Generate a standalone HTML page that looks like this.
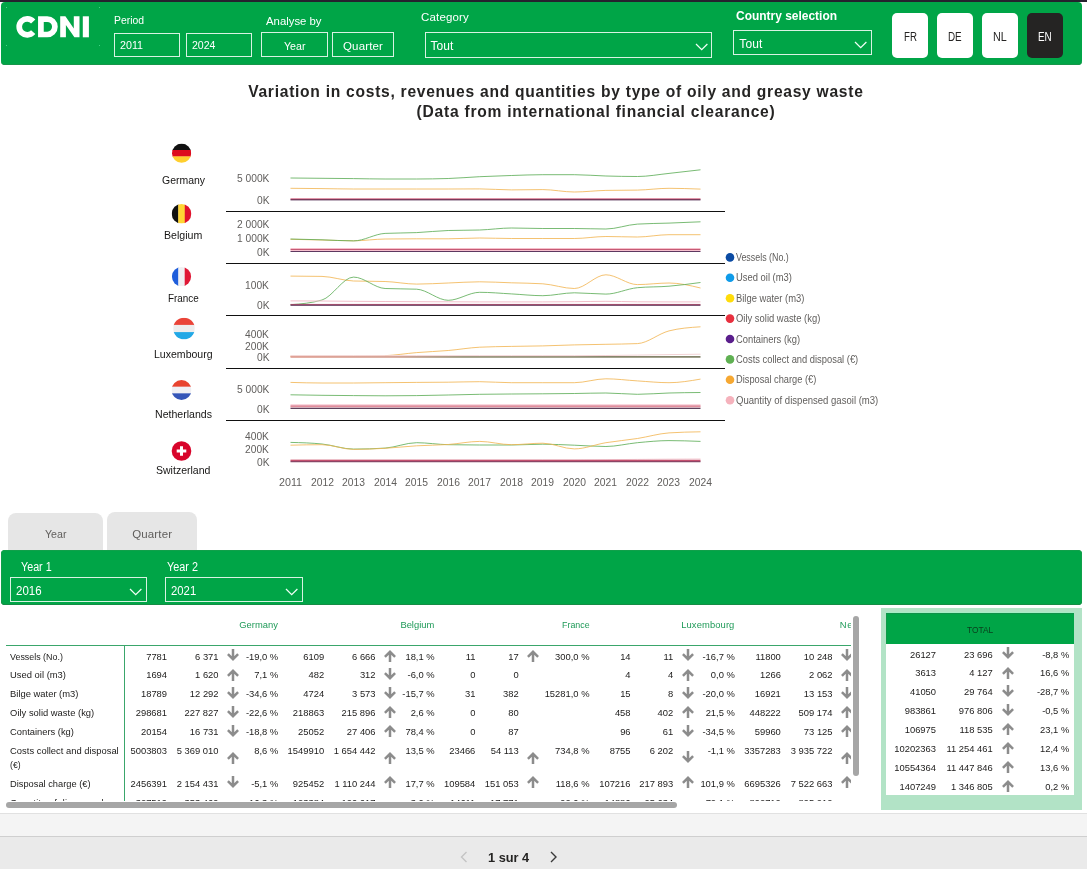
<!DOCTYPE html>
<html><head><meta charset="utf-8"><title>CDNI</title>
<style>
html,body{margin:0;padding:0}
body{width:1087px;height:869px;position:relative;overflow:hidden;background:#fff;font-family:"Liberation Sans",sans-serif}
#page{position:absolute;left:0;top:0;width:1087px;height:869px;will-change:transform}
.a{position:absolute}
.t{white-space:pre}
</style></head><body><div id="page">
<div class="a" style="left:0px;top:0px;width:1087px;height:2px;background:#25222e;"></div>
<div class="a" style="left:1px;top:2px;width:1081px;height:62.7px;background:#00a547;border-radius:4px;box-shadow:inset 0 -1px 0 #17964a;"></div>
<div class="a" style="left:6px;top:7px;width:1px;height:1px;background:#43d184;"></div>
<div class="a" style="left:99px;top:7px;width:1px;height:1px;background:#43d184;"></div>
<div class="a" style="left:6px;top:45px;width:1px;height:1px;background:#43d184;"></div>
<div class="a" style="left:99px;top:45px;width:1px;height:1px;background:#43d184;"></div>
<svg class="a" style="left:10px;top:10px" width="90" height="36" viewBox="10 10 90 36">
<g fill="none" stroke="#fff" stroke-width="5.7">
<path d="M33.2 21.5 A8 8 0 1 0 33.2 32.1" />
<path d="M40.9 19.1 H47.2 A7.7 7.7 0 0 1 47.2 34.5 H40.9 Z" stroke-linejoin="miter"/>
</g>
<path fill="#fff" d="M60.2 16.3 H65.4 L73.8 28.5 V16.3 H79.5 V37.3 H74.4 L65.9 25.1 V37.3 H60.2 Z"/>
<rect fill="#fff" x="82.8" y="16.3" width="6.1" height="21"/>
</svg>
<div class="a t" style="left:114.30px;top:13px;font-size:11px;line-height:15px;color:#ffffff;transform:scaleX(0.9435);transform-origin:0 0;">Period</div>
<div class="a" style="left:114px;top:33px;width:66px;height:24px;border:1px solid #d9f2e3;box-sizing:border-box;"></div>
<div class="a t" style="left:120.00px;top:38px;font-size:10.7px;line-height:15px;color:#ffffff;">2011</div>
<div class="a" style="left:186px;top:33px;width:66px;height:24px;border:1px solid #d9f2e3;box-sizing:border-box;"></div>
<div class="a t" style="left:192.00px;top:38px;font-size:10.7px;line-height:15px;color:#ffffff;transform:scaleX(0.9873);transform-origin:0 0;">2024</div>
<div class="a t" style="left:266.00px;top:13px;font-size:11.5px;line-height:16px;color:#ffffff;transform:scaleX(0.9866);transform-origin:0 0;">Analyse by</div>
<div class="a" style="left:261px;top:32px;width:67px;height:25px;border:1px solid #d9f2e3;box-sizing:border-box;"></div>
<div class="a t" style="left:283.75px;top:38px;font-size:11.5px;line-height:16px;color:#ffffff;transform:scaleX(0.9253);transform-origin:0 0;">Year</div>
<div class="a" style="left:332px;top:32px;width:62px;height:25px;border:1px solid #d9f2e3;box-sizing:border-box;"></div>
<div class="a t" style="left:343.00px;top:38px;font-size:11.5px;line-height:16px;color:#ffffff;letter-spacing:0.145px;">Quarter</div>
<div class="a t" style="left:421.00px;top:9px;font-size:11.5px;line-height:16px;color:#ffffff;letter-spacing:0.167px;">Category</div>
<div class="a" style="left:425px;top:32px;width:287px;height:25.5px;border:1px solid #d9f2e3;box-sizing:border-box;"></div>
<div class="a t" style="left:430.50px;top:38px;font-size:12px;line-height:17px;color:#ffffff;letter-spacing:0.080px;">Tout</div>
<svg class="a" style="left:694.5px;top:43.400000000000006px" width="13.4" height="7.6" viewBox="-1 -1 13.4 7.6"><path d="M0 0 L5.7 5.6 L11.4 0" fill="none" stroke="#f0fff6" stroke-width="1.25" stroke-linecap="butt"/></svg>
<div class="a t" style="left:736.00px;top:8px;font-size:12px;line-height:17px;color:#ffffff;font-weight:bold;transform:scaleX(0.9966);transform-origin:0 0;">Country selection</div>
<div class="a" style="left:733px;top:30px;width:139px;height:25px;border:1px solid #d9f2e3;box-sizing:border-box;"></div>
<div class="a t" style="left:739.30px;top:36px;font-size:12px;line-height:17px;color:#ffffff;letter-spacing:0.080px;">Tout</div>
<svg class="a" style="left:854.0999999999999px;top:41.2px" width="13.4" height="7.6" viewBox="-1 -1 13.4 7.6"><path d="M0 0 L5.7 5.6 L11.4 0" fill="none" stroke="#f0fff6" stroke-width="1.25" stroke-linecap="butt"/></svg>
<div class="a" style="left:892px;top:13px;width:36px;height:45px;background:#fff;border-radius:5px;"></div>
<div class="a t" style="left:903.75px;top:29px;font-size:12px;line-height:17px;color:#252423;transform:scaleX(0.8064);transform-origin:0 0;">FR</div>
<div class="a" style="left:937px;top:13px;width:36px;height:45px;background:#fff;border-radius:5px;"></div>
<div class="a t" style="left:948.35px;top:29px;font-size:12px;line-height:17px;color:#252423;transform:scaleX(0.8218);transform-origin:0 0;">DE</div>
<div class="a" style="left:982px;top:13px;width:36px;height:45px;background:#fff;border-radius:5px;"></div>
<div class="a t" style="left:993.35px;top:29px;font-size:12px;line-height:17px;color:#252423;transform:scaleX(0.8931);transform-origin:0 0;">NL</div>
<div class="a" style="left:1027px;top:13px;width:36px;height:45px;background:#252423;border-radius:5px;"></div>
<div class="a t" style="left:1038.35px;top:29px;font-size:12px;line-height:17px;color:#fff;transform:scaleX(0.8218);transform-origin:0 0;">EN</div>
<div class="a t" style="left:248.20px;top:81px;font-size:15.6px;line-height:22px;color:#252423;font-weight:bold;letter-spacing:0.731px;">Variation in costs, revenues and quantities by type of oily and greasy waste</div>
<div class="a t" style="left:416.60px;top:101px;font-size:15.6px;line-height:22px;color:#252423;font-weight:bold;letter-spacing:0.754px;">(Data from international financial clearance)</div>
<svg class="a" style="left:0;top:125px" width="900" height="375" viewBox="0 125 900 375">
<path d="M226 211.5 H725" stroke="#111" stroke-width="1" fill="none"/>
<path d="M226 263.5 H725" stroke="#111" stroke-width="1" fill="none"/>
<path d="M226 315.5 H725" stroke="#111" stroke-width="1" fill="none"/>
<path d="M226 368.5 H725" stroke="#111" stroke-width="1" fill="none"/>
<path d="M226 420.5 H725" stroke="#111" stroke-width="1" fill="none"/>
<defs><linearGradient id="lug" gradientUnits="userSpaceOnUse" x1="290" y1="0" x2="701" y2="0"><stop offset="0" stop-color="#dc9688"/><stop offset="0.25" stop-color="#cf9a8a"/><stop offset="0.42" stop-color="#8d8b6e"/><stop offset="1" stop-color="#83836a"/></linearGradient></defs>
<path d="M290.5 178.00 C301.0 178.10 311.5 178.20 322.0 178.30 C332.6 178.40 343.1 178.48 353.6 178.60 C364.1 178.72 374.6 179.00 385.1 179.00 C395.6 179.00 406.1 179.00 416.7 179.00 C427.2 179.00 437.7 178.83 448.2 178.50 C458.7 178.17 469.2 177.20 479.7 176.70 C490.2 176.20 500.8 175.83 511.3 175.50 C521.8 175.17 532.3 174.70 542.8 174.70 C553.3 174.70 563.8 174.70 574.3 174.70 C584.9 174.70 595.4 175.70 605.9 176.00 C616.4 176.30 626.9 176.50 637.4 176.50 C647.9 176.50 658.4 174.52 669.0 173.40 C679.5 172.28 690.0 171.04 700.5 169.80" fill="none" stroke="#5cac55" stroke-width="1.0" stroke-opacity="0.82" stroke-linecap="butt"/>
<path d="M290.5 188.30 C301.0 188.39 311.5 188.48 322.0 188.60 C332.6 188.72 343.1 189.00 353.6 189.00 C364.1 189.00 374.6 189.00 385.1 189.00 C395.6 189.00 406.1 189.00 416.7 189.00 C427.2 189.00 437.7 189.00 448.2 189.00 C458.7 189.00 469.2 188.90 479.7 188.90 C490.2 188.90 500.8 189.90 511.3 189.90 C521.8 189.90 532.3 189.60 542.8 189.60 C553.3 189.60 563.8 192.00 574.3 192.00 C584.9 192.00 595.4 190.60 605.9 190.40 C616.4 190.20 626.9 190.30 637.4 190.10 C647.9 189.90 658.4 188.30 669.0 188.30 C679.5 188.30 690.0 188.70 700.5 189.10" fill="none" stroke="#f1b552" stroke-width="1.0" stroke-opacity="0.82" stroke-linecap="butt"/>
<path d="M290.5 198.7 H700.5" fill="none" stroke="#d8708c" stroke-width="0.9" stroke-opacity="1"/>
<path d="M290.5 199.5 H700.5" fill="none" stroke="#7e3858" stroke-width="1.0" stroke-opacity="1"/>
<path d="M290.5 200.25 H700.5" fill="none" stroke="#6f4f6f" stroke-width="0.6" stroke-opacity="1"/>
<path d="M290.5 239.30 C301.0 239.53 311.5 239.75 322.0 240.00 C332.6 240.25 343.1 240.80 353.6 240.80 C364.1 240.80 374.6 239.13 385.1 239.00 C395.6 238.87 406.1 238.80 416.7 238.80 C427.2 238.80 437.7 238.80 448.2 238.80 C458.7 238.80 469.2 238.00 479.7 238.00 C490.2 238.00 500.8 238.50 511.3 238.50 C521.8 238.50 532.3 238.50 542.8 238.50 C553.3 238.50 563.8 238.50 574.3 238.50 C584.9 238.50 595.4 236.50 605.9 236.50 C616.4 236.50 626.9 237.00 637.4 237.00 C647.9 237.00 658.4 234.70 669.0 234.70 C679.5 234.70 690.0 234.70 700.5 234.70" fill="none" stroke="#f1b552" stroke-width="1.0" stroke-opacity="0.82" stroke-linecap="butt"/>
<path d="M290.5 239.00 C301.0 239.24 311.5 239.48 322.0 239.80 C332.6 240.12 343.1 240.90 353.6 240.90 C364.1 240.90 374.6 233.93 385.1 233.40 C395.6 232.87 406.1 233.08 416.7 232.60 C427.2 232.12 437.7 230.83 448.2 230.50 C458.7 230.17 469.2 230.33 479.7 230.00 C490.2 229.67 500.8 228.00 511.3 228.00 C521.8 228.00 532.3 228.50 542.8 228.50 C553.3 228.50 563.8 228.50 574.3 228.50 C584.9 228.50 595.4 229.00 605.9 229.00 C616.4 229.00 626.9 224.77 637.4 224.10 C647.9 223.43 658.4 223.48 669.0 223.10 C679.5 222.72 690.0 222.26 700.5 221.80" fill="none" stroke="#5cac55" stroke-width="1.0" stroke-opacity="0.82" stroke-linecap="butt"/>
<path d="M290.5 248.6 H700.5" fill="none" stroke="#f2a4b6" stroke-width="0.8" stroke-opacity="1"/>
<path d="M290.5 249.5 H700.5" fill="none" stroke="#c65a74" stroke-width="1.0" stroke-opacity="1"/>
<path d="M290.5 250.5 H700.5" fill="none" stroke="#f6c0ce" stroke-width="1.0" stroke-opacity="1"/>
<path d="M290.5 251.55 H700.5" fill="none" stroke="#5e3860" stroke-width="1.1" stroke-opacity="1"/>
<path d="M290.5 276.10 C301.0 276.15 311.5 276.20 322.0 276.40 C332.6 276.60 343.1 280.67 353.6 281.00 C364.1 281.33 374.6 281.17 385.1 281.50 C395.6 281.83 406.1 284.10 416.7 284.10 C427.2 284.10 437.7 283.38 448.2 283.00 C458.7 282.62 469.2 281.80 479.7 281.80 C490.2 281.80 500.8 282.47 511.3 282.80 C521.8 283.13 532.3 283.13 542.8 283.80 C553.3 284.47 563.8 288.50 574.3 288.50 C584.9 288.50 595.4 274.80 605.9 274.80 C616.4 274.80 626.9 284.60 637.4 284.60 C647.9 284.60 658.4 283.00 669.0 283.00 C679.5 283.00 690.0 285.50 700.5 288.00" fill="none" stroke="#f1b552" stroke-width="1.0" stroke-opacity="0.82" stroke-linecap="butt"/>
<path d="M290.5 304.70 C301.0 303.92 311.5 303.13 322.0 300.00 C332.6 296.87 343.1 277.10 353.6 277.10 C364.1 277.10 374.6 288.03 385.1 288.50 C395.6 288.97 406.1 288.73 416.7 289.20 C427.2 289.67 437.7 300.30 448.2 300.30 C458.7 300.30 469.2 292.30 479.7 292.30 C490.2 292.30 500.8 293.33 511.3 293.90 C521.8 294.47 532.3 295.70 542.8 295.70 C553.3 295.70 563.8 292.80 574.3 292.80 C584.9 292.80 595.4 294.10 605.9 294.10 C616.4 294.10 626.9 288.70 637.4 287.70 C647.9 286.70 658.4 287.07 669.0 286.20 C679.5 285.33 690.0 283.92 700.5 282.50" fill="none" stroke="#5cac55" stroke-width="1.0" stroke-opacity="0.82" stroke-linecap="butt"/>
<path d="M290.5 300.90 C301.0 300.92 311.5 300.93 322.0 301.00 C332.6 301.07 343.1 301.22 353.6 301.30 C364.1 301.38 374.6 301.43 385.1 301.50 C395.6 301.57 406.1 301.65 416.7 301.70 C427.2 301.75 437.7 301.77 448.2 301.80 C458.7 301.83 469.2 301.90 479.7 301.90 C490.2 301.90 500.8 301.90 511.3 301.90 C521.8 301.90 532.3 301.90 542.8 301.90 C553.3 301.90 563.8 301.80 574.3 301.70 C584.9 301.60 595.4 301.30 605.9 301.30 C616.4 301.30 626.9 301.73 637.4 301.80 C647.9 301.87 658.4 301.90 669.0 301.90 C679.5 301.90 690.0 301.90 700.5 301.90" fill="none" stroke="#f2bfca" stroke-width="1.0" stroke-opacity="1" stroke-linecap="butt"/>
<path d="M290.5 304.45 H700.5" fill="none" stroke="#a04464" stroke-width="1.0" stroke-opacity="1"/>
<path d="M290.5 305.4 H700.5" fill="none" stroke="#6e4666" stroke-width="1.0" stroke-opacity="1"/>
<path d="M290.5 356.40 C301.0 356.40 311.5 356.40 322.0 356.40 C332.6 356.40 343.1 356.40 353.6 356.40 C364.1 356.40 374.6 356.17 385.1 355.70 C395.6 355.23 406.1 353.47 416.7 352.60 C427.2 351.73 437.7 351.40 448.2 350.50 C458.7 349.60 469.2 347.73 479.7 347.20 C490.2 346.67 500.8 346.62 511.3 346.40 C521.8 346.18 532.3 346.15 542.8 345.90 C553.3 345.65 563.8 345.17 574.3 344.90 C584.9 344.63 595.4 344.52 605.9 344.30 C616.4 344.08 626.9 344.07 637.4 343.60 C647.9 343.13 658.4 333.63 669.0 330.90 C679.5 328.17 690.0 327.48 700.5 326.80" fill="none" stroke="#f1b552" stroke-width="1.0" stroke-opacity="0.82" stroke-linecap="butt"/>
<path d="M290.5 355.9 H385.11538461538464" fill="none" stroke="#fcecd2" stroke-width="0.9" stroke-opacity="1"/>
<path d="M290.5 356.95 H700.5" fill="none" stroke="url(#lug)" stroke-width="1.8" stroke-opacity="1"/>
<path d="M290.5 355.70 C301.0 355.70 311.5 355.70 322.0 355.70 C332.6 355.70 343.1 355.70 353.6 355.70 C364.1 355.70 374.6 355.70 385.1 355.70 C395.6 355.70 406.1 355.70 416.7 355.70 C427.2 355.70 437.7 355.70 448.2 355.70 C458.7 355.70 469.2 355.70 479.7 355.70 C490.2 355.70 500.8 355.70 511.3 355.70 C521.8 355.70 532.3 355.70 542.8 355.70 C553.3 355.70 563.8 355.70 574.3 355.70 C584.9 355.70 595.4 355.60 605.9 355.50 C616.4 355.40 626.9 355.25 637.4 355.10 C647.9 354.95 658.4 354.75 669.0 354.60 C679.5 354.45 690.0 354.32 700.5 354.20" fill="none" stroke="#f3d3d5" stroke-width="1.0" stroke-opacity="1" stroke-linecap="butt"/>
<path d="M290.5 382.40 C301.0 382.70 311.5 383.00 322.0 383.00 C332.6 383.00 343.1 383.00 353.6 383.00 C364.1 383.00 374.6 382.80 385.1 382.70 C395.6 382.60 406.1 382.48 416.7 382.40 C427.2 382.32 437.7 382.32 448.2 382.20 C458.7 382.08 469.2 381.70 479.7 381.70 C490.2 381.70 500.8 382.70 511.3 382.70 C521.8 382.70 532.3 382.70 542.8 382.70 C553.3 382.70 563.8 382.70 574.3 382.70 C584.9 382.70 595.4 378.80 605.9 378.80 C616.4 378.80 626.9 380.25 637.4 380.90 C647.9 381.55 658.4 382.70 669.0 382.70 C679.5 382.70 690.0 380.90 700.5 379.10" fill="none" stroke="#f1b552" stroke-width="1.0" stroke-opacity="0.82" stroke-linecap="butt"/>
<path d="M290.5 394.80 C301.0 394.98 311.5 395.17 322.0 395.30 C332.6 395.43 343.1 395.52 353.6 395.60 C364.1 395.68 374.6 395.80 385.1 395.80 C395.6 395.80 406.1 395.73 416.7 395.60 C427.2 395.47 437.7 395.22 448.2 395.00 C458.7 394.78 469.2 394.47 479.7 394.30 C490.2 394.13 500.8 394.08 511.3 394.00 C521.8 393.92 532.3 393.88 542.8 393.80 C553.3 393.72 563.8 393.63 574.3 393.50 C584.9 393.37 595.4 393.00 605.9 393.00 C616.4 393.00 626.9 394.30 637.4 394.30 C647.9 394.30 658.4 393.30 669.0 393.00 C679.5 392.70 690.0 392.60 700.5 392.50" fill="none" stroke="#5cac55" stroke-width="1.0" stroke-opacity="0.82" stroke-linecap="butt"/>
<path d="M290.5 404.95 H700.5" fill="none" stroke="#f4b0bc" stroke-width="0.9" stroke-opacity="1"/>
<path d="M290.5 405.8 H700.5" fill="none" stroke="#dc8a9c" stroke-width="1.0" stroke-opacity="1"/>
<path d="M290.5 406.75 H700.5" fill="none" stroke="#dc7284" stroke-width="1.0" stroke-opacity="1"/>
<path d="M290.5 407.5 H700.5" fill="none" stroke="#f8d2da" stroke-width="0.6" stroke-opacity="1"/>
<path d="M290.5 408.4 H700.5" fill="none" stroke="#5c425c" stroke-width="1.3" stroke-opacity="1"/>
<path d="M290.5 442.40 C301.0 442.67 311.5 442.93 322.0 444.00 C332.6 445.07 343.1 449.10 353.6 449.10 C364.1 449.10 374.6 448.77 385.1 448.10 C395.6 447.43 406.1 442.70 416.7 442.70 C427.2 442.70 437.7 444.50 448.2 444.70 C458.7 444.90 469.2 445.00 479.7 445.00 C490.2 445.00 500.8 445.00 511.3 445.00 C521.8 445.00 532.3 444.20 542.8 444.20 C553.3 444.20 563.8 444.82 574.3 445.20 C584.9 445.58 595.4 446.50 605.9 446.50 C616.4 446.50 626.9 443.68 637.4 442.70 C647.9 441.72 658.4 440.60 669.0 440.60 C679.5 440.60 690.0 441.00 700.5 441.40" fill="none" stroke="#5cac55" stroke-width="1.0" stroke-opacity="0.82" stroke-linecap="butt"/>
<path d="M290.5 445.20 C301.0 444.95 311.5 444.70 322.0 444.70 C332.6 444.70 343.1 449.40 353.6 449.40 C364.1 449.40 374.6 448.90 385.1 448.30 C395.6 447.70 406.1 446.43 416.7 445.80 C427.2 445.17 437.7 445.23 448.2 444.50 C458.7 443.77 469.2 441.40 479.7 441.40 C490.2 441.40 500.8 444.70 511.3 444.70 C521.8 444.70 532.3 443.20 542.8 443.20 C553.3 443.20 563.8 448.90 574.3 448.90 C584.9 448.90 595.4 444.43 605.9 442.70 C616.4 440.97 626.9 440.13 637.4 438.50 C647.9 436.87 658.4 433.63 669.0 432.90 C679.5 432.17 690.0 431.98 700.5 431.80" fill="none" stroke="#f1b552" stroke-width="1.0" stroke-opacity="0.82" stroke-linecap="butt"/>
<path d="M290.5 459.90 C301.0 459.90 311.5 459.90 322.0 459.90 C332.6 459.90 343.1 459.90 353.6 459.90 C364.1 459.90 374.6 459.90 385.1 459.90 C395.6 459.90 406.1 459.90 416.7 459.90 C427.2 459.90 437.7 459.90 448.2 459.90 C458.7 459.90 469.2 459.90 479.7 459.90 C490.2 459.90 500.8 459.90 511.3 459.90 C521.8 459.90 532.3 459.90 542.8 459.90 C553.3 459.90 563.8 459.90 574.3 459.90 C584.9 459.90 595.4 459.78 605.9 459.70 C616.4 459.62 626.9 459.50 637.4 459.40 C647.9 459.30 658.4 459.18 669.0 459.10 C679.5 459.02 690.0 458.96 700.5 458.90" fill="none" stroke="#f6cdd4" stroke-width="0.9" stroke-opacity="1" stroke-linecap="butt"/>
<path d="M290.5 460.4 H700.5" fill="none" stroke="#c4506e" stroke-width="1.5" stroke-opacity="1"/>
<path d="M290.5 461.6 H700.5" fill="none" stroke="#8a4666" stroke-width="1.3" stroke-opacity="1"/>
<defs>
<clipPath id="cde"><circle cx="181.6" cy="153.2" r="9.6"/></clipPath>
<clipPath id="cbe"><circle cx="181.5" cy="213.8" r="9.8"/></clipPath>
<clipPath id="cfr"><circle cx="181.5" cy="276.6" r="9.6"/></clipPath>
<clipPath id="clu"><circle cx="184" cy="328.5" r="10.8"/></clipPath>
<clipPath id="cnl"><circle cx="181.5" cy="390" r="10"/></clipPath>
<clipPath id="cch"><circle cx="181.5" cy="451" r="9.8"/></clipPath>
</defs>
<g clip-path="url(#cde)"><rect x="172.0" y="143.60" width="19.2" height="6.70" fill="#111111"/><rect x="172.0" y="150.00" width="19.2" height="6.70" fill="#dd0c1e"/><rect x="172.0" y="156.40" width="19.2" height="6.70" fill="#ffcf2e"/></g>
<g clip-path="url(#cbe)"><rect x="171.70" y="204.0" width="6.83" height="19.6" fill="#111111"/><rect x="178.23" y="204.0" width="6.83" height="19.6" fill="#ffd534"/><rect x="184.77" y="204.0" width="6.83" height="19.6" fill="#e0122c"/></g>
<g clip-path="url(#cfr)"><rect x="171.90" y="267.0" width="6.70" height="19.2" fill="#1f5edb"/><rect x="178.30" y="267.0" width="6.70" height="19.2" fill="#f0f0f2"/><rect x="184.70" y="267.0" width="6.70" height="19.2" fill="#e01836"/></g>
<g clip-path="url(#clu)"><rect x="173.2" y="317.70" width="21.6" height="7.50" fill="#ea4438"/><rect x="173.2" y="324.90" width="21.6" height="7.50" fill="#ededed"/><rect x="173.2" y="332.10" width="21.6" height="7.50" fill="#22a8e6"/></g>
<g clip-path="url(#cnl)"><rect x="171.5" y="380.00" width="20" height="6.97" fill="#e8432f"/><rect x="171.5" y="386.67" width="20" height="6.97" fill="#f0f0f4"/><rect x="171.5" y="393.33" width="20" height="6.97" fill="#3556b8"/></g>
<circle cx="181.5" cy="451" r="9.8" fill="#d8052b"/><path d="M180 446.2 h3 v3.3 h3.3 v3 h-3.3 v3.3 h-3 v-3.3 h-3.3 v-3 h3.3 z" fill="#fff"/>
<circle cx="730" cy="257.40" r="4.3" fill="#0b4ba3"/>
<circle cx="730" cy="277.80" r="4.3" fill="#0f9be9"/>
<circle cx="730" cy="298.20" r="4.3" fill="#ffdc0a"/>
<circle cx="730" cy="318.60" r="4.3" fill="#e8303f"/>
<circle cx="730" cy="339.00" r="4.3" fill="#5a1e8c"/>
<circle cx="730" cy="359.40" r="4.3" fill="#5fb052"/>
<circle cx="730" cy="379.80" r="4.3" fill="#f6a832"/>
<circle cx="730" cy="400.20" r="4.3" fill="#f5b2bc"/>
</svg>
<div class="a t" style="left:161.80px;top:173px;font-size:11px;line-height:15px;color:#161514;transform:scaleX(0.9506);transform-origin:0 0;">Germany</div>
<div class="a t" style="left:163.75px;top:228px;font-size:11px;line-height:15px;color:#161514;transform:scaleX(0.9637);transform-origin:0 0;">Belgium</div>
<div class="a t" style="left:167.60px;top:291px;font-size:11px;line-height:15px;color:#161514;transform:scaleX(0.8997);transform-origin:0 0;">France</div>
<div class="a t" style="left:153.50px;top:347px;font-size:11px;line-height:15px;color:#161514;transform:scaleX(0.9583);transform-origin:0 0;">Luxembourg</div>
<div class="a t" style="left:154.50px;top:407px;font-size:11px;line-height:15px;color:#161514;transform:scaleX(0.9610);transform-origin:0 0;">Netherlands</div>
<div class="a t" style="left:155.70px;top:463px;font-size:11px;line-height:15px;color:#161514;transform:scaleX(0.9568);transform-origin:0 0;">Switzerland</div>
<div class="a t" style="left:236.78px;top:171px;font-size:11px;line-height:15px;color:#605e5c;transform:scaleX(0.9300);transform-origin:0 0;">5 000K</div>
<div class="a t" style="left:256.69px;top:193px;font-size:11px;line-height:15px;color:#605e5c;transform:scaleX(0.9300);transform-origin:0 0;">0K</div>
<div class="a t" style="left:236.78px;top:217px;font-size:11px;line-height:15px;color:#605e5c;transform:scaleX(0.9300);transform-origin:0 0;">2 000K</div>
<div class="a t" style="left:236.78px;top:231px;font-size:11px;line-height:15px;color:#605e5c;transform:scaleX(0.9300);transform-origin:0 0;">1 000K</div>
<div class="a t" style="left:256.69px;top:245px;font-size:11px;line-height:15px;color:#605e5c;transform:scaleX(0.9300);transform-origin:0 0;">0K</div>
<div class="a t" style="left:245.31px;top:278px;font-size:11px;line-height:15px;color:#605e5c;transform:scaleX(0.9300);transform-origin:0 0;">100K</div>
<div class="a t" style="left:256.69px;top:298px;font-size:11px;line-height:15px;color:#605e5c;transform:scaleX(0.9300);transform-origin:0 0;">0K</div>
<div class="a t" style="left:245.31px;top:327px;font-size:11px;line-height:15px;color:#605e5c;transform:scaleX(0.9300);transform-origin:0 0;">400K</div>
<div class="a t" style="left:245.31px;top:339px;font-size:11px;line-height:15px;color:#605e5c;transform:scaleX(0.9300);transform-origin:0 0;">200K</div>
<div class="a t" style="left:256.69px;top:350px;font-size:11px;line-height:15px;color:#605e5c;transform:scaleX(0.9300);transform-origin:0 0;">0K</div>
<div class="a t" style="left:236.78px;top:382px;font-size:11px;line-height:15px;color:#605e5c;transform:scaleX(0.9300);transform-origin:0 0;">5 000K</div>
<div class="a t" style="left:256.69px;top:402px;font-size:11px;line-height:15px;color:#605e5c;transform:scaleX(0.9300);transform-origin:0 0;">0K</div>
<div class="a t" style="left:245.31px;top:429px;font-size:11px;line-height:15px;color:#605e5c;transform:scaleX(0.9300);transform-origin:0 0;">400K</div>
<div class="a t" style="left:245.31px;top:442px;font-size:11px;line-height:15px;color:#605e5c;transform:scaleX(0.9300);transform-origin:0 0;">200K</div>
<div class="a t" style="left:256.69px;top:455px;font-size:11px;line-height:15px;color:#605e5c;transform:scaleX(0.9300);transform-origin:0 0;">0K</div>
<div class="a t" style="left:279.30px;top:475px;font-size:11px;line-height:15px;color:#605e5c;transform:scaleX(0.9723);transform-origin:0 0;">2011</div>
<div class="a t" style="left:310.79px;top:475px;font-size:11px;line-height:15px;color:#605e5c;transform:scaleX(0.9399);transform-origin:0 0;">2012</div>
<div class="a t" style="left:342.28px;top:475px;font-size:11px;line-height:15px;color:#605e5c;transform:scaleX(0.9399);transform-origin:0 0;">2013</div>
<div class="a t" style="left:373.78px;top:475px;font-size:11px;line-height:15px;color:#605e5c;transform:scaleX(0.9399);transform-origin:0 0;">2014</div>
<div class="a t" style="left:405.27px;top:475px;font-size:11px;line-height:15px;color:#605e5c;transform:scaleX(0.9399);transform-origin:0 0;">2015</div>
<div class="a t" style="left:436.76px;top:475px;font-size:11px;line-height:15px;color:#605e5c;transform:scaleX(0.9399);transform-origin:0 0;">2016</div>
<div class="a t" style="left:468.25px;top:475px;font-size:11px;line-height:15px;color:#605e5c;transform:scaleX(0.9399);transform-origin:0 0;">2017</div>
<div class="a t" style="left:499.75px;top:475px;font-size:11px;line-height:15px;color:#605e5c;transform:scaleX(0.9399);transform-origin:0 0;">2018</div>
<div class="a t" style="left:531.24px;top:475px;font-size:11px;line-height:15px;color:#605e5c;transform:scaleX(0.9399);transform-origin:0 0;">2019</div>
<div class="a t" style="left:562.73px;top:475px;font-size:11px;line-height:15px;color:#605e5c;transform:scaleX(0.9399);transform-origin:0 0;">2020</div>
<div class="a t" style="left:594.22px;top:475px;font-size:11px;line-height:15px;color:#605e5c;transform:scaleX(0.9399);transform-origin:0 0;">2021</div>
<div class="a t" style="left:625.72px;top:475px;font-size:11px;line-height:15px;color:#605e5c;transform:scaleX(0.9399);transform-origin:0 0;">2022</div>
<div class="a t" style="left:657.21px;top:475px;font-size:11px;line-height:15px;color:#605e5c;transform:scaleX(0.9399);transform-origin:0 0;">2023</div>
<div class="a t" style="left:688.70px;top:475px;font-size:11px;line-height:15px;color:#605e5c;transform:scaleX(0.9399);transform-origin:0 0;">2024</div>
<div class="a t" style="left:736.20px;top:251px;font-size:10px;line-height:14px;color:#605e5c;transform:scaleX(0.8879);transform-origin:0 0;">Vessels (No.)</div>
<div class="a t" style="left:736.20px;top:271px;font-size:10px;line-height:14px;color:#605e5c;transform:scaleX(0.9402);transform-origin:0 0;">Used oil (m3)</div>
<div class="a t" style="left:736.20px;top:292px;font-size:10px;line-height:14px;color:#605e5c;transform:scaleX(0.9382);transform-origin:0 0;">Bilge water (m3)</div>
<div class="a t" style="left:736.20px;top:312px;font-size:10px;line-height:14px;color:#605e5c;transform:scaleX(0.9422);transform-origin:0 0;">Oily solid waste (kg)</div>
<div class="a t" style="left:736.20px;top:333px;font-size:10px;line-height:14px;color:#605e5c;transform:scaleX(0.9362);transform-origin:0 0;">Containers (kg)</div>
<div class="a t" style="left:736.20px;top:353px;font-size:10px;line-height:14px;color:#605e5c;transform:scaleX(0.9356);transform-origin:0 0;">Costs collect and disposal (€)</div>
<div class="a t" style="left:736.20px;top:373px;font-size:10px;line-height:14px;color:#605e5c;transform:scaleX(0.9261);transform-origin:0 0;">Disposal charge (€)</div>
<div class="a t" style="left:736.20px;top:394px;font-size:10px;line-height:14px;color:#605e5c;transform:scaleX(0.9553);transform-origin:0 0;">Quantity of dispensed gasoil (m3)</div>
<div class="a" style="left:8px;top:513px;width:94.7px;height:40px;background:#e6e6e6;border-radius:8px 8px 0 0;"></div>
<div class="a" style="left:107px;top:511.6px;width:90px;height:41px;background:#e6e6e6;border-radius:8px 8px 0 0;"></div>
<div class="a t" style="left:44.75px;top:526px;font-size:11.5px;line-height:16px;color:#605e5c;transform:scaleX(0.9253);transform-origin:0 0;">Year</div>
<div class="a t" style="left:132.20px;top:526px;font-size:11.5px;line-height:16px;color:#605e5c;letter-spacing:0.145px;">Quarter</div>
<div class="a" style="left:1px;top:549.7px;width:1081px;height:55.4px;background:#00a547;border-radius:4px;box-shadow:inset 0 -1px 0 #168c45, inset 0 0 0 1px #10a04a;"></div>
<div class="a t" style="left:21.20px;top:559px;font-size:12px;line-height:17px;color:#ffffff;transform:scaleX(0.8933);transform-origin:0 0;">Year 1</div>
<div class="a" style="left:10px;top:577px;width:136.7px;height:24.6px;border:1px solid #d9f2e3;box-sizing:border-box;"></div>
<div class="a t" style="left:15.60px;top:583px;font-size:12px;line-height:17px;color:#ffffff;transform:scaleX(0.9590);transform-origin:0 0;">2016</div>
<svg class="a" style="left:128.8px;top:588.0px" width="13.4" height="7.6" viewBox="-1 -1 13.4 7.6"><path d="M0 0 L5.7 5.6 L11.4 0" fill="none" stroke="#f0fff6" stroke-width="1.25" stroke-linecap="butt"/></svg>
<div class="a t" style="left:167.20px;top:559px;font-size:12px;line-height:17px;color:#ffffff;transform:scaleX(0.9021);transform-origin:0 0;">Year 2</div>
<div class="a" style="left:165px;top:577px;width:137.7px;height:24.6px;border:1px solid #d9f2e3;box-sizing:border-box;"></div>
<div class="a t" style="left:170.70px;top:583px;font-size:12px;line-height:17px;color:#ffffff;transform:scaleX(0.9440);transform-origin:0 0;">2021</div>
<svg class="a" style="left:284.7px;top:588.0px" width="13.4" height="7.6" viewBox="-1 -1 13.4 7.6"><path d="M0 0 L5.7 5.6 L11.4 0" fill="none" stroke="#f0fff6" stroke-width="1.25" stroke-linecap="butt"/></svg>
<div class="a" style="left:0;top:606px;width:851.3px;height:195px;overflow:hidden"><div class="a" style="left:0;top:-606px;width:900px;height:869px">
<div class="a t" style="left:239.30px;top:618px;font-size:9.4px;line-height:13px;color:#1f9a58;letter-spacing:0.006px;">Germany</div>
<div class="a t" style="left:400.40px;top:618px;font-size:9.4px;line-height:13px;color:#1f9a58;letter-spacing:0.006px;">Belgium</div>
<div class="a t" style="left:561.60px;top:618px;font-size:9.4px;line-height:13px;color:#1f9a58;transform:scaleX(0.9468);transform-origin:0 0;">France</div>
<div class="a t" style="left:681.20px;top:618px;font-size:9.4px;line-height:13px;color:#1f9a58;letter-spacing:0.114px;">Luxembourg</div>
<div class="a t" style="left:839.80px;top:618px;font-size:9.4px;line-height:13px;color:#1f9a58;letter-spacing:0.683px;">Netherlands</div>
<div class="a" style="left:6px;top:644.9px;width:846px;height:1.2px;background:#3aa66b;"></div>
<div class="a" style="left:124.1px;top:645px;width:1.2px;height:160px;background:#3aa66b;"></div>
<div class="a t" style="left:10.10px;top:650px;font-size:9.4px;line-height:13px;color:#1c1b1a;transform:scaleX(0.9482);transform-origin:0 0;">Vessels (No.)</div>
<div class="a t" style="left:10.10px;top:668px;font-size:9.4px;line-height:13px;color:#1c1b1a;letter-spacing:0.008px;">Used oil (m3)</div>
<div class="a t" style="left:10.10px;top:687px;font-size:9.4px;line-height:13px;color:#1c1b1a;letter-spacing:0.004px;">Bilge water (m3)</div>
<div class="a t" style="left:10.10px;top:706px;font-size:9.4px;line-height:13px;color:#1c1b1a;letter-spacing:0.010px;">Oily solid waste (kg)</div>
<div class="a t" style="left:10.10px;top:725px;font-size:9.4px;line-height:13px;color:#1c1b1a;transform:scaleX(0.9975);transform-origin:0 0;">Containers (kg)</div>
<div class="a t" style="left:10.10px;top:744px;font-size:9.4px;line-height:13px;color:#1c1b1a;letter-spacing:0.009px;">Costs collect and disposal</div>
<div class="a t" style="left:10.10px;top:777px;font-size:9.4px;line-height:13px;color:#1c1b1a;transform:scaleX(0.9902);transform-origin:0 0;">Disposal charge (€)</div>
<div class="a t" style="left:10.10px;top:796px;font-size:9.4px;line-height:13px;color:#1c1b1a;letter-spacing:0.130px;">Quantity of dispensed</div>
<div class="a t" style="left:10.10px;top:758px;font-size:9.4px;line-height:13px;color:#1c1b1a;transform:scaleX(0.9227);transform-origin:0 0;">(€)</div>
<div class="a t" style="left:146.19px;top:650px;font-size:9.4px;line-height:13px;color:#1c1b1a;">7781</div>
<div class="a t" style="left:195.08px;top:650px;font-size:9.4px;line-height:13px;color:#1c1b1a;">6 371</div>
<div class="a t" style="left:245.90px;top:650px;font-size:9.4px;line-height:13px;color:#1c1b1a;">-19,0 %</div>
<svg class="a" style="left:225.40px;top:647.10px" width="16" height="16" viewBox="-8 -8 16 16"><path d="M0 -6 V4 M-5.1 -0.9 L0 4.2 L5.1 -0.9" fill="none" stroke="#8c8c8c" stroke-width="2.5" stroke-linecap="butt" stroke-linejoin="miter"/></svg>
<div class="a t" style="left:146.19px;top:668px;font-size:9.4px;line-height:13px;color:#1c1b1a;">1694</div>
<div class="a t" style="left:195.08px;top:668px;font-size:9.4px;line-height:13px;color:#1c1b1a;">1 620</div>
<div class="a t" style="left:254.26px;top:668px;font-size:9.4px;line-height:13px;color:#1c1b1a;">7,1 %</div>
<svg class="a" style="left:225.40px;top:666.60px" width="16" height="16" viewBox="-8 -8 16 16"><path d="M0 6 V-4 M-5.1 0.9 L0 -4.2 L5.1 0.9" fill="none" stroke="#8c8c8c" stroke-width="2.5" stroke-linecap="butt" stroke-linejoin="miter"/></svg>
<div class="a t" style="left:140.96px;top:687px;font-size:9.4px;line-height:13px;color:#1c1b1a;">18789</div>
<div class="a t" style="left:189.85px;top:687px;font-size:9.4px;line-height:13px;color:#1c1b1a;">12 292</div>
<div class="a t" style="left:245.90px;top:687px;font-size:9.4px;line-height:13px;color:#1c1b1a;">-34,6 %</div>
<svg class="a" style="left:225.40px;top:685.00px" width="16" height="16" viewBox="-8 -8 16 16"><path d="M0 -6 V4 M-5.1 -0.9 L0 4.2 L5.1 -0.9" fill="none" stroke="#8c8c8c" stroke-width="2.5" stroke-linecap="butt" stroke-linejoin="miter"/></svg>
<div class="a t" style="left:135.73px;top:706px;font-size:9.4px;line-height:13px;color:#1c1b1a;">298681</div>
<div class="a t" style="left:184.62px;top:706px;font-size:9.4px;line-height:13px;color:#1c1b1a;">227 827</div>
<div class="a t" style="left:245.90px;top:706px;font-size:9.4px;line-height:13px;color:#1c1b1a;">-22,6 %</div>
<svg class="a" style="left:225.40px;top:703.80px" width="16" height="16" viewBox="-8 -8 16 16"><path d="M0 -6 V4 M-5.1 -0.9 L0 4.2 L5.1 -0.9" fill="none" stroke="#8c8c8c" stroke-width="2.5" stroke-linecap="butt" stroke-linejoin="miter"/></svg>
<div class="a t" style="left:140.96px;top:725px;font-size:9.4px;line-height:13px;color:#1c1b1a;">20154</div>
<div class="a t" style="left:189.85px;top:725px;font-size:9.4px;line-height:13px;color:#1c1b1a;">16 731</div>
<div class="a t" style="left:245.90px;top:725px;font-size:9.4px;line-height:13px;color:#1c1b1a;">-18,8 %</div>
<svg class="a" style="left:225.40px;top:722.60px" width="16" height="16" viewBox="-8 -8 16 16"><path d="M0 -6 V4 M-5.1 -0.9 L0 4.2 L5.1 -0.9" fill="none" stroke="#8c8c8c" stroke-width="2.5" stroke-linecap="butt" stroke-linejoin="miter"/></svg>
<div class="a t" style="left:130.51px;top:744px;font-size:9.4px;line-height:13px;color:#1c1b1a;">5003803</div>
<div class="a t" style="left:176.78px;top:744px;font-size:9.4px;line-height:13px;color:#1c1b1a;">5 369 010</div>
<div class="a t" style="left:254.26px;top:744px;font-size:9.4px;line-height:13px;color:#1c1b1a;">8,6 %</div>
<svg class="a" style="left:225.40px;top:749.70px" width="16" height="16" viewBox="-8 -8 16 16"><path d="M0 6 V-4 M-5.1 0.9 L0 -4.2 L5.1 0.9" fill="none" stroke="#8c8c8c" stroke-width="2.5" stroke-linecap="butt" stroke-linejoin="miter"/></svg>
<div class="a t" style="left:130.51px;top:777px;font-size:9.4px;line-height:13px;color:#1c1b1a;">2456391</div>
<div class="a t" style="left:176.78px;top:777px;font-size:9.4px;line-height:13px;color:#1c1b1a;">2 154 431</div>
<div class="a t" style="left:251.13px;top:777px;font-size:9.4px;line-height:13px;color:#1c1b1a;">-5,1 %</div>
<svg class="a" style="left:225.40px;top:774.00px" width="16" height="16" viewBox="-8 -8 16 16"><path d="M0 -6 V4 M-5.1 -0.9 L0 4.2 L5.1 -0.9" fill="none" stroke="#8c8c8c" stroke-width="2.5" stroke-linecap="butt" stroke-linejoin="miter"/></svg>
<div class="a t" style="left:135.73px;top:796px;font-size:9.4px;line-height:13px;color:#1c1b1a;">327519</div>
<div class="a t" style="left:184.62px;top:796px;font-size:9.4px;line-height:13px;color:#1c1b1a;">353 469</div>
<div class="a t" style="left:249.04px;top:796px;font-size:9.4px;line-height:13px;color:#1c1b1a;">16,3 %</div>
<div class="a t" style="left:303.29px;top:650px;font-size:9.4px;line-height:13px;color:#1c1b1a;">6109</div>
<div class="a t" style="left:352.08px;top:650px;font-size:9.4px;line-height:13px;color:#1c1b1a;">6 666</div>
<div class="a t" style="left:405.44px;top:650px;font-size:9.4px;line-height:13px;color:#1c1b1a;">18,1 %</div>
<svg class="a" style="left:381.90px;top:647.50px" width="16" height="16" viewBox="-8 -8 16 16"><path d="M0 6 V-4 M-5.1 0.9 L0 -4.2 L5.1 0.9" fill="none" stroke="#8c8c8c" stroke-width="2.5" stroke-linecap="butt" stroke-linejoin="miter"/></svg>
<div class="a t" style="left:308.52px;top:668px;font-size:9.4px;line-height:13px;color:#1c1b1a;">482</div>
<div class="a t" style="left:359.92px;top:668px;font-size:9.4px;line-height:13px;color:#1c1b1a;">312</div>
<div class="a t" style="left:407.53px;top:668px;font-size:9.4px;line-height:13px;color:#1c1b1a;">-6,0 %</div>
<svg class="a" style="left:381.90px;top:666.20px" width="16" height="16" viewBox="-8 -8 16 16"><path d="M0 -6 V4 M-5.1 -0.9 L0 4.2 L5.1 -0.9" fill="none" stroke="#8c8c8c" stroke-width="2.5" stroke-linecap="butt" stroke-linejoin="miter"/></svg>
<div class="a t" style="left:303.29px;top:687px;font-size:9.4px;line-height:13px;color:#1c1b1a;">4724</div>
<div class="a t" style="left:352.08px;top:687px;font-size:9.4px;line-height:13px;color:#1c1b1a;">3 573</div>
<div class="a t" style="left:402.30px;top:687px;font-size:9.4px;line-height:13px;color:#1c1b1a;">-15,7 %</div>
<svg class="a" style="left:381.90px;top:685.00px" width="16" height="16" viewBox="-8 -8 16 16"><path d="M0 -6 V4 M-5.1 -0.9 L0 4.2 L5.1 -0.9" fill="none" stroke="#8c8c8c" stroke-width="2.5" stroke-linecap="butt" stroke-linejoin="miter"/></svg>
<div class="a t" style="left:292.83px;top:706px;font-size:9.4px;line-height:13px;color:#1c1b1a;">218863</div>
<div class="a t" style="left:341.62px;top:706px;font-size:9.4px;line-height:13px;color:#1c1b1a;">215 896</div>
<div class="a t" style="left:410.66px;top:706px;font-size:9.4px;line-height:13px;color:#1c1b1a;">2,6 %</div>
<svg class="a" style="left:381.90px;top:704.20px" width="16" height="16" viewBox="-8 -8 16 16"><path d="M0 6 V-4 M-5.1 0.9 L0 -4.2 L5.1 0.9" fill="none" stroke="#8c8c8c" stroke-width="2.5" stroke-linecap="butt" stroke-linejoin="miter"/></svg>
<div class="a t" style="left:298.06px;top:725px;font-size:9.4px;line-height:13px;color:#1c1b1a;">25052</div>
<div class="a t" style="left:346.85px;top:725px;font-size:9.4px;line-height:13px;color:#1c1b1a;">27 406</div>
<div class="a t" style="left:405.44px;top:725px;font-size:9.4px;line-height:13px;color:#1c1b1a;">78,4 %</div>
<svg class="a" style="left:381.90px;top:723.00px" width="16" height="16" viewBox="-8 -8 16 16"><path d="M0 6 V-4 M-5.1 0.9 L0 -4.2 L5.1 0.9" fill="none" stroke="#8c8c8c" stroke-width="2.5" stroke-linecap="butt" stroke-linejoin="miter"/></svg>
<div class="a t" style="left:287.61px;top:744px;font-size:9.4px;line-height:13px;color:#1c1b1a;">1549910</div>
<div class="a t" style="left:333.78px;top:744px;font-size:9.4px;line-height:13px;color:#1c1b1a;">1 654 442</div>
<div class="a t" style="left:405.44px;top:744px;font-size:9.4px;line-height:13px;color:#1c1b1a;">13,5 %</div>
<svg class="a" style="left:381.90px;top:749.70px" width="16" height="16" viewBox="-8 -8 16 16"><path d="M0 6 V-4 M-5.1 0.9 L0 -4.2 L5.1 0.9" fill="none" stroke="#8c8c8c" stroke-width="2.5" stroke-linecap="butt" stroke-linejoin="miter"/></svg>
<div class="a t" style="left:292.83px;top:777px;font-size:9.4px;line-height:13px;color:#1c1b1a;">925452</div>
<div class="a t" style="left:334.48px;top:777px;font-size:9.4px;line-height:13px;color:#1c1b1a;">1 110 244</div>
<div class="a t" style="left:405.44px;top:777px;font-size:9.4px;line-height:13px;color:#1c1b1a;">17,7 %</div>
<svg class="a" style="left:381.90px;top:774.40px" width="16" height="16" viewBox="-8 -8 16 16"><path d="M0 6 V-4 M-5.1 0.9 L0 -4.2 L5.1 0.9" fill="none" stroke="#8c8c8c" stroke-width="2.5" stroke-linecap="butt" stroke-linejoin="miter"/></svg>
<div class="a t" style="left:292.83px;top:796px;font-size:9.4px;line-height:13px;color:#1c1b1a;">123384</div>
<div class="a t" style="left:341.62px;top:796px;font-size:9.4px;line-height:13px;color:#1c1b1a;">120 617</div>
<div class="a t" style="left:410.66px;top:796px;font-size:9.4px;line-height:13px;color:#1c1b1a;">3,0 %</div>
<div class="a t" style="left:465.64px;top:650px;font-size:9.4px;line-height:13px;color:#1c1b1a;">11</div>
<div class="a t" style="left:508.34px;top:650px;font-size:9.4px;line-height:13px;color:#1c1b1a;">17</div>
<div class="a t" style="left:555.11px;top:650px;font-size:9.4px;line-height:13px;color:#1c1b1a;">300,0 %</div>
<svg class="a" style="left:525.00px;top:647.50px" width="16" height="16" viewBox="-8 -8 16 16"><path d="M0 6 V-4 M-5.1 0.9 L0 -4.2 L5.1 0.9" fill="none" stroke="#8c8c8c" stroke-width="2.5" stroke-linecap="butt" stroke-linejoin="miter"/></svg>
<div class="a t" style="left:470.17px;top:668px;font-size:9.4px;line-height:13px;color:#1c1b1a;">0</div>
<div class="a t" style="left:513.57px;top:668px;font-size:9.4px;line-height:13px;color:#1c1b1a;">0</div>
<div class="a t" style="left:464.94px;top:687px;font-size:9.4px;line-height:13px;color:#1c1b1a;">31</div>
<div class="a t" style="left:503.12px;top:687px;font-size:9.4px;line-height:13px;color:#1c1b1a;">382</div>
<div class="a t" style="left:544.65px;top:687px;font-size:9.4px;line-height:13px;color:#1c1b1a;">15281,0 %</div>
<div class="a t" style="left:470.17px;top:706px;font-size:9.4px;line-height:13px;color:#1c1b1a;">0</div>
<div class="a t" style="left:508.34px;top:706px;font-size:9.4px;line-height:13px;color:#1c1b1a;">80</div>
<div class="a t" style="left:470.17px;top:725px;font-size:9.4px;line-height:13px;color:#1c1b1a;">0</div>
<div class="a t" style="left:508.34px;top:725px;font-size:9.4px;line-height:13px;color:#1c1b1a;">87</div>
<div class="a t" style="left:449.26px;top:744px;font-size:9.4px;line-height:13px;color:#1c1b1a;">23466</div>
<div class="a t" style="left:490.75px;top:744px;font-size:9.4px;line-height:13px;color:#1c1b1a;">54 113</div>
<div class="a t" style="left:555.11px;top:744px;font-size:9.4px;line-height:13px;color:#1c1b1a;">734,8 %</div>
<svg class="a" style="left:525.00px;top:749.70px" width="16" height="16" viewBox="-8 -8 16 16"><path d="M0 6 V-4 M-5.1 0.9 L0 -4.2 L5.1 0.9" fill="none" stroke="#8c8c8c" stroke-width="2.5" stroke-linecap="butt" stroke-linejoin="miter"/></svg>
<div class="a t" style="left:444.03px;top:777px;font-size:9.4px;line-height:13px;color:#1c1b1a;">109584</div>
<div class="a t" style="left:484.82px;top:777px;font-size:9.4px;line-height:13px;color:#1c1b1a;">151 053</div>
<div class="a t" style="left:555.80px;top:777px;font-size:9.4px;line-height:13px;color:#1c1b1a;">118,6 %</div>
<svg class="a" style="left:525.00px;top:774.40px" width="16" height="16" viewBox="-8 -8 16 16"><path d="M0 6 V-4 M-5.1 0.9 L0 -4.2 L5.1 0.9" fill="none" stroke="#8c8c8c" stroke-width="2.5" stroke-linecap="butt" stroke-linejoin="miter"/></svg>
<div class="a t" style="left:449.96px;top:796px;font-size:9.4px;line-height:13px;color:#1c1b1a;">14611</div>
<div class="a t" style="left:490.05px;top:796px;font-size:9.4px;line-height:13px;color:#1c1b1a;">17 771</div>
<div class="a t" style="left:560.34px;top:796px;font-size:9.4px;line-height:13px;color:#1c1b1a;">92,0 %</div>
<div class="a t" style="left:620.14px;top:650px;font-size:9.4px;line-height:13px;color:#1c1b1a;">14</div>
<div class="a t" style="left:663.54px;top:650px;font-size:9.4px;line-height:13px;color:#1c1b1a;">11</div>
<div class="a t" style="left:702.50px;top:650px;font-size:9.4px;line-height:13px;color:#1c1b1a;">-16,7 %</div>
<svg class="a" style="left:680.30px;top:647.10px" width="16" height="16" viewBox="-8 -8 16 16"><path d="M0 -6 V4 M-5.1 -0.9 L0 4.2 L5.1 -0.9" fill="none" stroke="#8c8c8c" stroke-width="2.5" stroke-linecap="butt" stroke-linejoin="miter"/></svg>
<div class="a t" style="left:625.37px;top:668px;font-size:9.4px;line-height:13px;color:#1c1b1a;">4</div>
<div class="a t" style="left:668.07px;top:668px;font-size:9.4px;line-height:13px;color:#1c1b1a;">4</div>
<div class="a t" style="left:710.86px;top:668px;font-size:9.4px;line-height:13px;color:#1c1b1a;">0,0 %</div>
<svg class="a" style="left:680.30px;top:666.60px" width="16" height="16" viewBox="-8 -8 16 16"><path d="M0 6 V-4 M-5.1 0.9 L0 -4.2 L5.1 0.9" fill="none" stroke="#8c8c8c" stroke-width="2.5" stroke-linecap="butt" stroke-linejoin="miter"/></svg>
<div class="a t" style="left:620.14px;top:687px;font-size:9.4px;line-height:13px;color:#1c1b1a;">15</div>
<div class="a t" style="left:668.07px;top:687px;font-size:9.4px;line-height:13px;color:#1c1b1a;">8</div>
<div class="a t" style="left:702.50px;top:687px;font-size:9.4px;line-height:13px;color:#1c1b1a;">-20,0 %</div>
<svg class="a" style="left:680.30px;top:685.00px" width="16" height="16" viewBox="-8 -8 16 16"><path d="M0 -6 V4 M-5.1 -0.9 L0 4.2 L5.1 -0.9" fill="none" stroke="#8c8c8c" stroke-width="2.5" stroke-linecap="butt" stroke-linejoin="miter"/></svg>
<div class="a t" style="left:614.92px;top:706px;font-size:9.4px;line-height:13px;color:#1c1b1a;">458</div>
<div class="a t" style="left:657.62px;top:706px;font-size:9.4px;line-height:13px;color:#1c1b1a;">402</div>
<div class="a t" style="left:705.64px;top:706px;font-size:9.4px;line-height:13px;color:#1c1b1a;">21,5 %</div>
<svg class="a" style="left:680.30px;top:704.20px" width="16" height="16" viewBox="-8 -8 16 16"><path d="M0 6 V-4 M-5.1 0.9 L0 -4.2 L5.1 0.9" fill="none" stroke="#8c8c8c" stroke-width="2.5" stroke-linecap="butt" stroke-linejoin="miter"/></svg>
<div class="a t" style="left:620.14px;top:725px;font-size:9.4px;line-height:13px;color:#1c1b1a;">96</div>
<div class="a t" style="left:662.84px;top:725px;font-size:9.4px;line-height:13px;color:#1c1b1a;">61</div>
<div class="a t" style="left:702.50px;top:725px;font-size:9.4px;line-height:13px;color:#1c1b1a;">-34,5 %</div>
<svg class="a" style="left:680.30px;top:722.60px" width="16" height="16" viewBox="-8 -8 16 16"><path d="M0 -6 V4 M-5.1 -0.9 L0 4.2 L5.1 -0.9" fill="none" stroke="#8c8c8c" stroke-width="2.5" stroke-linecap="butt" stroke-linejoin="miter"/></svg>
<div class="a t" style="left:609.69px;top:744px;font-size:9.4px;line-height:13px;color:#1c1b1a;">8755</div>
<div class="a t" style="left:649.78px;top:744px;font-size:9.4px;line-height:13px;color:#1c1b1a;">6 202</div>
<div class="a t" style="left:707.73px;top:744px;font-size:9.4px;line-height:13px;color:#1c1b1a;">-1,1 %</div>
<svg class="a" style="left:680.30px;top:749.30px" width="16" height="16" viewBox="-8 -8 16 16"><path d="M0 -6 V4 M-5.1 -0.9 L0 4.2 L5.1 -0.9" fill="none" stroke="#8c8c8c" stroke-width="2.5" stroke-linecap="butt" stroke-linejoin="miter"/></svg>
<div class="a t" style="left:599.23px;top:777px;font-size:9.4px;line-height:13px;color:#1c1b1a;">107216</div>
<div class="a t" style="left:639.32px;top:777px;font-size:9.4px;line-height:13px;color:#1c1b1a;">217 893</div>
<div class="a t" style="left:700.41px;top:777px;font-size:9.4px;line-height:13px;color:#1c1b1a;">101,9 %</div>
<svg class="a" style="left:680.30px;top:774.40px" width="16" height="16" viewBox="-8 -8 16 16"><path d="M0 6 V-4 M-5.1 0.9 L0 -4.2 L5.1 0.9" fill="none" stroke="#8c8c8c" stroke-width="2.5" stroke-linecap="butt" stroke-linejoin="miter"/></svg>
<div class="a t" style="left:604.46px;top:796px;font-size:9.4px;line-height:13px;color:#1c1b1a;">14886</div>
<div class="a t" style="left:644.55px;top:796px;font-size:9.4px;line-height:13px;color:#1c1b1a;">25 634</div>
<div class="a t" style="left:705.64px;top:796px;font-size:9.4px;line-height:13px;color:#1c1b1a;">72,1 %</div>
<div class="a t" style="left:755.46px;top:650px;font-size:9.4px;line-height:13px;color:#1c1b1a;">11800</div>
<div class="a t" style="left:803.85px;top:650px;font-size:9.4px;line-height:13px;color:#1c1b1a;">10 248</div>
<svg class="a" style="left:839.10px;top:647.10px" width="16" height="16" viewBox="-8 -8 16 16"><path d="M0 -6 V4 M-5.1 -0.9 L0 4.2 L5.1 -0.9" fill="none" stroke="#8c8c8c" stroke-width="2.5" stroke-linecap="butt" stroke-linejoin="miter"/></svg>
<div class="a t" style="left:759.99px;top:668px;font-size:9.4px;line-height:13px;color:#1c1b1a;">1266</div>
<div class="a t" style="left:809.08px;top:668px;font-size:9.4px;line-height:13px;color:#1c1b1a;">2 062</div>
<svg class="a" style="left:839.10px;top:666.60px" width="16" height="16" viewBox="-8 -8 16 16"><path d="M0 6 V-4 M-5.1 0.9 L0 -4.2 L5.1 0.9" fill="none" stroke="#8c8c8c" stroke-width="2.5" stroke-linecap="butt" stroke-linejoin="miter"/></svg>
<div class="a t" style="left:754.76px;top:687px;font-size:9.4px;line-height:13px;color:#1c1b1a;">16921</div>
<div class="a t" style="left:803.85px;top:687px;font-size:9.4px;line-height:13px;color:#1c1b1a;">13 153</div>
<svg class="a" style="left:839.10px;top:685.00px" width="16" height="16" viewBox="-8 -8 16 16"><path d="M0 -6 V4 M-5.1 -0.9 L0 4.2 L5.1 -0.9" fill="none" stroke="#8c8c8c" stroke-width="2.5" stroke-linecap="butt" stroke-linejoin="miter"/></svg>
<div class="a t" style="left:749.53px;top:706px;font-size:9.4px;line-height:13px;color:#1c1b1a;">448222</div>
<div class="a t" style="left:798.62px;top:706px;font-size:9.4px;line-height:13px;color:#1c1b1a;">509 174</div>
<svg class="a" style="left:839.10px;top:704.20px" width="16" height="16" viewBox="-8 -8 16 16"><path d="M0 6 V-4 M-5.1 0.9 L0 -4.2 L5.1 0.9" fill="none" stroke="#8c8c8c" stroke-width="2.5" stroke-linecap="butt" stroke-linejoin="miter"/></svg>
<div class="a t" style="left:754.76px;top:725px;font-size:9.4px;line-height:13px;color:#1c1b1a;">59960</div>
<div class="a t" style="left:803.85px;top:725px;font-size:9.4px;line-height:13px;color:#1c1b1a;">73 125</div>
<svg class="a" style="left:839.10px;top:723.00px" width="16" height="16" viewBox="-8 -8 16 16"><path d="M0 6 V-4 M-5.1 0.9 L0 -4.2 L5.1 0.9" fill="none" stroke="#8c8c8c" stroke-width="2.5" stroke-linecap="butt" stroke-linejoin="miter"/></svg>
<div class="a t" style="left:744.31px;top:744px;font-size:9.4px;line-height:13px;color:#1c1b1a;">3357283</div>
<div class="a t" style="left:790.78px;top:744px;font-size:9.4px;line-height:13px;color:#1c1b1a;">3 935 722</div>
<svg class="a" style="left:839.10px;top:749.70px" width="16" height="16" viewBox="-8 -8 16 16"><path d="M0 6 V-4 M-5.1 0.9 L0 -4.2 L5.1 0.9" fill="none" stroke="#8c8c8c" stroke-width="2.5" stroke-linecap="butt" stroke-linejoin="miter"/></svg>
<div class="a t" style="left:744.31px;top:777px;font-size:9.4px;line-height:13px;color:#1c1b1a;">6695326</div>
<div class="a t" style="left:790.78px;top:777px;font-size:9.4px;line-height:13px;color:#1c1b1a;">7 522 663</div>
<svg class="a" style="left:839.10px;top:774.40px" width="16" height="16" viewBox="-8 -8 16 16"><path d="M0 6 V-4 M-5.1 0.9 L0 -4.2 L5.1 0.9" fill="none" stroke="#8c8c8c" stroke-width="2.5" stroke-linecap="butt" stroke-linejoin="miter"/></svg>
<div class="a t" style="left:749.53px;top:796px;font-size:9.4px;line-height:13px;color:#1c1b1a;">892712</div>
<div class="a t" style="left:798.62px;top:796px;font-size:9.4px;line-height:13px;color:#1c1b1a;">895 212</div>
</div></div>
<div class="a" style="left:853px;top:615.6px;width:6px;height:160.5px;background:#a6a6a6;border-radius:3px;"></div>
<div class="a" style="left:6.2px;top:801.9px;width:670.6px;height:6.2px;background:#a6a6a6;border-radius:3.1px;"></div>
<div class="a" style="left:881.3px;top:608px;width:200.6px;height:202px;background:#b2e3c6;"></div>
<div class="a" style="left:886px;top:611.9px;width:188.2px;height:1px;background:#a4eec5;"></div>
<div class="a" style="left:886px;top:612.9px;width:188.2px;height:31.2px;background:#00a547;box-shadow:inset 0 1px 0 #10914a, inset 1px 0 0 #0f9a48;"></div>
<div class="a" style="left:886px;top:644px;width:188.2px;height:151px;background:#fff;"></div>
<div class="a t" style="left:966.95px;top:623px;font-size:9.4px;line-height:13px;color:#0a3d1c;transform:scaleX(0.8938);transform-origin:0 0;">TOTAL</div>
<div class="a t" style="left:909.96px;top:648px;font-size:9.4px;line-height:13px;color:#1c1b1a;">26127</div>
<div class="a t" style="left:964.05px;top:648px;font-size:9.4px;line-height:13px;color:#1c1b1a;">23 696</div>
<div class="a t" style="left:1042.13px;top:648px;font-size:9.4px;line-height:13px;color:#1c1b1a;">-8,8 %</div>
<svg class="a" style="left:1000.30px;top:645.20px" width="16" height="16" viewBox="-8 -8 16 16"><path d="M0 -6 V4 M-5.1 -0.9 L0 4.2 L5.1 -0.9" fill="none" stroke="#8c8c8c" stroke-width="2.5" stroke-linecap="butt" stroke-linejoin="miter"/></svg>
<div class="a t" style="left:915.19px;top:666px;font-size:9.4px;line-height:13px;color:#1c1b1a;">3613</div>
<div class="a t" style="left:969.28px;top:666px;font-size:9.4px;line-height:13px;color:#1c1b1a;">4 127</div>
<div class="a t" style="left:1040.04px;top:666px;font-size:9.4px;line-height:13px;color:#1c1b1a;">16,6 %</div>
<svg class="a" style="left:1000.30px;top:664.55px" width="16" height="16" viewBox="-8 -8 16 16"><path d="M0 6 V-4 M-5.1 0.9 L0 -4.2 L5.1 0.9" fill="none" stroke="#8c8c8c" stroke-width="2.5" stroke-linecap="butt" stroke-linejoin="miter"/></svg>
<div class="a t" style="left:909.96px;top:685px;font-size:9.4px;line-height:13px;color:#1c1b1a;">41050</div>
<div class="a t" style="left:964.05px;top:685px;font-size:9.4px;line-height:13px;color:#1c1b1a;">29 764</div>
<div class="a t" style="left:1036.90px;top:685px;font-size:9.4px;line-height:13px;color:#1c1b1a;">-28,7 %</div>
<svg class="a" style="left:1000.30px;top:683.10px" width="16" height="16" viewBox="-8 -8 16 16"><path d="M0 -6 V4 M-5.1 -0.9 L0 4.2 L5.1 -0.9" fill="none" stroke="#8c8c8c" stroke-width="2.5" stroke-linecap="butt" stroke-linejoin="miter"/></svg>
<div class="a t" style="left:904.73px;top:704px;font-size:9.4px;line-height:13px;color:#1c1b1a;">983861</div>
<div class="a t" style="left:958.82px;top:704px;font-size:9.4px;line-height:13px;color:#1c1b1a;">976 806</div>
<div class="a t" style="left:1042.13px;top:704px;font-size:9.4px;line-height:13px;color:#1c1b1a;">-0,5 %</div>
<svg class="a" style="left:1000.30px;top:702.05px" width="16" height="16" viewBox="-8 -8 16 16"><path d="M0 -6 V4 M-5.1 -0.9 L0 4.2 L5.1 -0.9" fill="none" stroke="#8c8c8c" stroke-width="2.5" stroke-linecap="butt" stroke-linejoin="miter"/></svg>
<div class="a t" style="left:904.73px;top:723px;font-size:9.4px;line-height:13px;color:#1c1b1a;">106975</div>
<div class="a t" style="left:959.52px;top:723px;font-size:9.4px;line-height:13px;color:#1c1b1a;">118 535</div>
<div class="a t" style="left:1040.04px;top:723px;font-size:9.4px;line-height:13px;color:#1c1b1a;">23,1 %</div>
<svg class="a" style="left:1000.30px;top:721.40px" width="16" height="16" viewBox="-8 -8 16 16"><path d="M0 6 V-4 M-5.1 0.9 L0 -4.2 L5.1 0.9" fill="none" stroke="#8c8c8c" stroke-width="2.5" stroke-linecap="butt" stroke-linejoin="miter"/></svg>
<div class="a t" style="left:894.28px;top:742px;font-size:9.4px;line-height:13px;color:#1c1b1a;">10202363</div>
<div class="a t" style="left:946.45px;top:742px;font-size:9.4px;line-height:13px;color:#1c1b1a;">11 254 461</div>
<div class="a t" style="left:1040.04px;top:742px;font-size:9.4px;line-height:13px;color:#1c1b1a;">12,4 %</div>
<svg class="a" style="left:1000.30px;top:740.35px" width="16" height="16" viewBox="-8 -8 16 16"><path d="M0 6 V-4 M-5.1 0.9 L0 -4.2 L5.1 0.9" fill="none" stroke="#8c8c8c" stroke-width="2.5" stroke-linecap="butt" stroke-linejoin="miter"/></svg>
<div class="a t" style="left:894.28px;top:761px;font-size:9.4px;line-height:13px;color:#1c1b1a;">10554364</div>
<div class="a t" style="left:946.45px;top:761px;font-size:9.4px;line-height:13px;color:#1c1b1a;">11 447 846</div>
<div class="a t" style="left:1040.04px;top:761px;font-size:9.4px;line-height:13px;color:#1c1b1a;">13,6 %</div>
<svg class="a" style="left:1000.30px;top:759.30px" width="16" height="16" viewBox="-8 -8 16 16"><path d="M0 6 V-4 M-5.1 0.9 L0 -4.2 L5.1 0.9" fill="none" stroke="#8c8c8c" stroke-width="2.5" stroke-linecap="butt" stroke-linejoin="miter"/></svg>
<div class="a t" style="left:899.51px;top:780px;font-size:9.4px;line-height:13px;color:#1c1b1a;">1407249</div>
<div class="a t" style="left:950.98px;top:780px;font-size:9.4px;line-height:13px;color:#1c1b1a;">1 346 805</div>
<div class="a t" style="left:1045.26px;top:780px;font-size:9.4px;line-height:13px;color:#1c1b1a;">0,2 %</div>
<svg class="a" style="left:1000.30px;top:778.25px" width="16" height="16" viewBox="-8 -8 16 16"><path d="M0 6 V-4 M-5.1 0.9 L0 -4.2 L5.1 0.9" fill="none" stroke="#8c8c8c" stroke-width="2.5" stroke-linecap="butt" stroke-linejoin="miter"/></svg>
<div class="a" style="left:0px;top:813px;width:1087px;height:1px;background:#e1e1e1;"></div>
<div class="a" style="left:0px;top:814px;width:1087px;height:22px;background:#f4f4f4;"></div>
<div class="a" style="left:0px;top:836px;width:1087px;height:1px;background:#cfcfcf;"></div>
<div class="a" style="left:0px;top:837px;width:1087px;height:32px;background:#eaeaea;"></div>
<div class="a t" style="left:488.00px;top:849px;font-size:13px;line-height:18px;color:#252423;font-weight:bold;transform:scaleX(0.9830);transform-origin:0 0;">1 sur 4</div>
<svg class="a" style="left:458px;top:849px" width="12" height="16" viewBox="0 0 12 16"><path d="M8.5 3 L3.5 8 L8.5 13" fill="none" stroke="#c4c4c4" stroke-width="1.4"/></svg>
<svg class="a" style="left:547px;top:849px" width="12" height="16" viewBox="0 0 12 16"><path d="M4 3 L9 8 L4 13" fill="none" stroke="#3a3a3a" stroke-width="1.4"/></svg>
</div></body></html>
